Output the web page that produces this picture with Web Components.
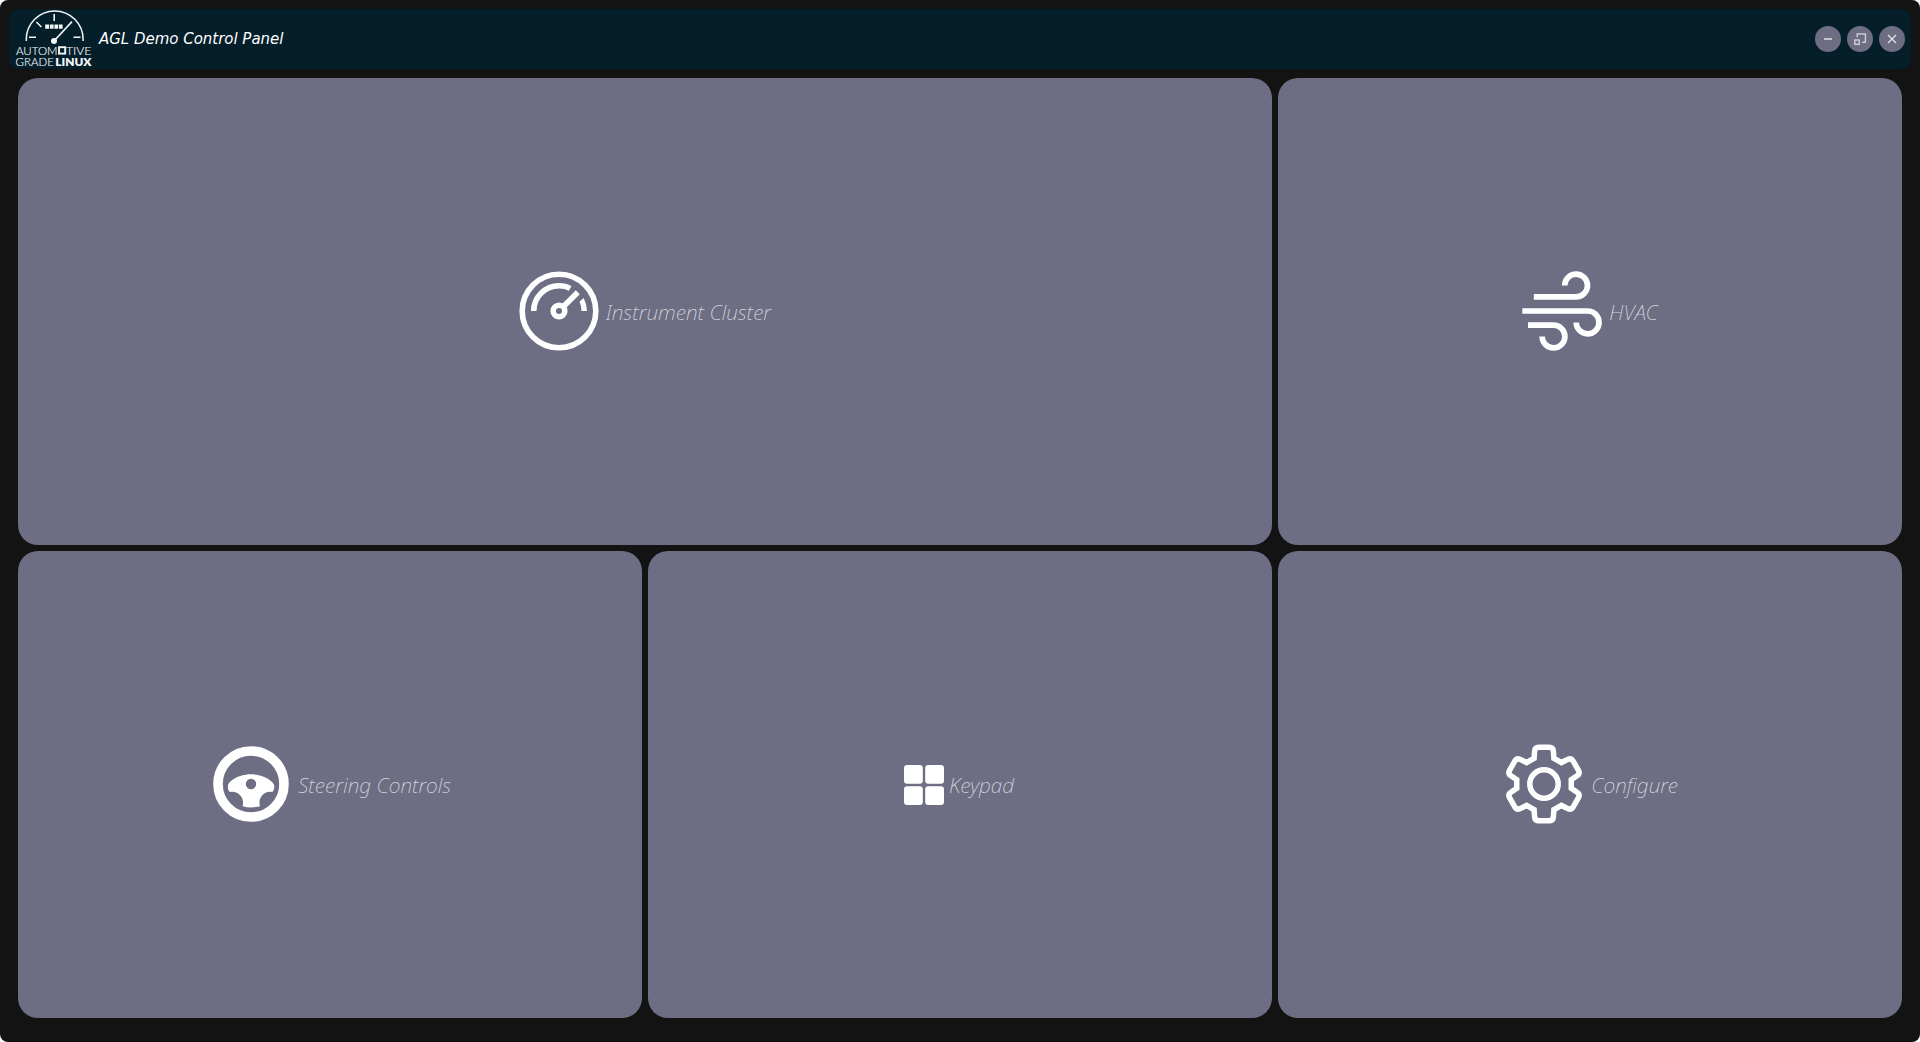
<!DOCTYPE html>
<html lang="en">
<head>
<meta charset="utf-8">
<title>AGL Demo Control Panel</title>
<style>
html, body { margin: 0; height: 100%; background: #fff; }
</style>
</head>
<body>
<agl-window></agl-window>
<script>
class Base extends HTMLElement {
  constructor() {
    super();
    this.attachShadow({ mode: 'open' }).innerHTML = this.render();
  }
}

customElements.define('agl-logo', class extends Base {
  render() {
    return `<style>
      :host { display: block; width: 78px; height: 60px; }
      svg { display: block; }
      text { font-family: Lato, "Liberation Sans", sans-serif; fill: #f4f7f8; }
      .light { font-weight: 300; stroke: #f4f7f8; stroke-width: .15px; }
    </style>
    <svg width="78" height="60" viewBox="15 9 78 60" fill="none" stroke="#f4f7f8">
      <path d="M26.3 41V39.4a28.4 28.4 0 0 1 56.8 0V41" stroke-width="1.5"/>
      <path d="M29 37.2h7M73.5 37.2h7M54.2 14v7M36.4 22l5 5" stroke-width="1.6"/>
      <path d="M54 41L72 21.6" stroke-width="1.6"/>
      <circle cx="54" cy="41" r="3" fill="#f4f7f8" stroke="none"/>
      <path d="M45.2 24.5h3.8v4.3h-3.8zM49.8 24.5h3.8v4.3h-3.8zM54.4 24.5h3.8v4.3h-3.8zM59 24.5h3.6v4.3H59z" fill="#f4f7f8" stroke="none"/>
      <text class="light" x="16" y="54.8" font-size="12" textLength="41.5" lengthAdjust="spacingAndGlyphs">AUTOM</text>
      <rect x="59" y="47.2" width="6.2" height="6.4" stroke-width="1.9"/>
      <text class="light" x="66" y="54.8" font-size="12" textLength="25.5" lengthAdjust="spacingAndGlyphs">TIVE</text>
      <text class="light" x="15.6" y="65.6" font-size="12" textLength="38.2" lengthAdjust="spacingAndGlyphs">GRADE</text>
      <text x="55.3" y="65.6" font-size="12" font-weight="800" textLength="36.2" lengthAdjust="spacingAndGlyphs" stroke="none">LINUX</text>
    </svg>`;
  }
});

customElements.define('round-button', class extends Base {
  render() {
    return `<style>
      :host { display: grid; place-items: center; width: 26px; height: 26px; border-radius: 50%; background: #6d6d84; }
      ::slotted(svg) { display: block; }
    </style><slot></slot>`;
  }
});

customElements.define('title-bar', class extends Base {
  render() {
    return `<style>
      :host { display: flex; align-items: center; height: 60px; box-sizing: border-box; padding: 0 6px; border-radius: 10px; background: #041e2a; }
      .title { flex: 1; margin-left: 6px; color: #fff; font: italic 16.65px/20px "DejaVu Sans Condensed", "DejaVu Sans", sans-serif; font-stretch: condensed; white-space: nowrap; }
      .buttons { display: flex; gap: 6px; }
    </style>
    <agl-logo></agl-logo>
    <div class="title">AGL Demo Control Panel</div>
    <div class="buttons">
      <round-button><svg width="26" height="26" fill="none" stroke="#c5c5cf" stroke-width="2"><path d="M9 13h8"/></svg></round-button>
      <round-button><svg width="26" height="26" fill="none" stroke="#c9c9d3" stroke-width="1.5"><path d="M10.2 11.2V7.9h8.2v8.3h-3.3"/><rect x="7.8" y="14" width="4.4" height="4.3"/></svg></round-button>
      <round-button><svg width="26" height="26" fill="none" stroke="#e4e4ea" stroke-width="1.2"><path d="M9 9l8 8M17 9l-8 8"/></svg></round-button>
    </div>`;
  }
});

customElements.define('panel-tile', class extends Base {
  render() {
    return `<style>
      :host { display: flex; align-items: center; justify-content: center; gap: 7px; border-radius: 20px; background: #6d6d84; box-sizing: border-box; padding-bottom: 1px; }
      :host([wide]) { grid-column: span 2; }
      .label { color: #d5d5de; font: italic 200 20.75px/30px "Noto Sans", "Open Sans", sans-serif; white-space: nowrap; padding-top: 2px; }
      ::slotted(svg) { display: block; flex: none; }
    </style><slot name="icon"></slot><span class="label"><slot></slot></span>`;
  }
});

/* Six-toothed outline: each tooth has two rounded outer corners between two valley points. */
function gearPath() {
  const pts = [];
  const at = (r, deg) => [r * Math.sin(deg * Math.PI / 180), -r * Math.cos(deg * Math.PI / 180)];
  for (let k = 0; k < 6; k++) {
    const a = k * 60;
    pts.push([at(27.6, a - 21), 0], [at(37.8, a - 14), 4], [at(37.8, a + 14), 4], [at(27.6, a + 21), 0]);
  }
  const toward = (p, q, d) => {
    const l = Math.hypot(q[0] - p[0], q[1] - p[1]);
    return [p[0] + (q[0] - p[0]) * d / l, p[1] + (q[1] - p[1]) * d / l];
  };
  const f = p => p.map(v => v.toFixed(2)).join(' ');
  return pts.map(([p, r], i) => {
    const c = i ? 'L' : 'M';
    if (!r) return c + f(p);
    return c + f(toward(p, pts[i - 1][0], r)) + 'Q' + f(p) + ' ' + f(toward(p, pts[i + 1][0], r));
  }).join('') + 'Z';
}

customElements.define('agl-window', class extends Base {
  render() {
    return `<style>
      :host { display: flex; flex-direction: column; gap: 9px; box-sizing: border-box; width: 1920px; height: 1042px; padding: 9px; background: #131313; border-radius: 8px; }
      main { display: grid; grid-template-columns: repeat(3, 624px); grid-template-rows: repeat(2, 467px); gap: 6px; padding: 0 9px; }
      .small { margin: 1px -2px 0 0; }
      .nudge { padding-left: 2px; }
      .keypad { padding-right: 2px; }
    </style>
    <title-bar></title-bar>
    <main>
      <panel-tile wide>
        <svg slot="icon" width="80" height="80" viewBox="-40 -40 80 80" fill="none" stroke="#fff" stroke-width="5.6">
          <circle r="36.8"/>
          <path d="M-25.3 0A25.3 25.3 0 0 1 0 -25.3C4 -25.3 7.8 -24.5 11.2 -22.6"/>
          <path d="M24.6 -13A28 28 0 0 1 28 0H22.4C22.4 -3.4 21.7 -6.5 20.5 -9.2Z" fill="#fff" stroke="none"/>
          <circle r="5.8"/>
          <path d="M4 -4L18.8 -18.8"/>
        </svg>Instrument Cluster</panel-tile>
      <panel-tile>
        <svg slot="icon" width="80" height="80" viewBox="1522 271 80 80" fill="none" stroke="#fff" stroke-width="5.7">
          <path d="M1533.8 296.9H1576A11.4 11.4 0 1 0 1564.7 285.5"/>
          <path d="M1522.3 311H1587.6A11.4 11.4 0 1 1 1576.2 322.5"/>
          <path d="M1528 325.1H1553.5A11.4 11.4 0 1 1 1542.1 336.6"/>
        </svg>HVAC</panel-tile>
      <panel-tile class="nudge">
        <svg slot="icon" width="80" height="80" viewBox="211 744 80 80">
          <circle cx="251" cy="784" r="33" fill="none" stroke="#fff" stroke-width="9.6"/>
          <path fill="#fff" fill-rule="evenodd" d="M228 785.6C228.5 781 239 774.3 251 774.3S273.5 781 274.3 785.6C274.5 788.5 273.6 790.5 272.3 792C264.5 790.5 257.5 797.5 260 806.2Q251 808.6 242.6 806.2C245 797.5 238 790.5 229.8 792C228.2 790.5 227.6 788.5 228 785.6ZM256.2 784a5.2 5.2 0 1 0-10.4 0a5.2 5.2 0 1 0 10.4 0Z"/>
        </svg>Steering Controls</panel-tile>
      <panel-tile class="keypad">
        <svg slot="icon" class="small" width="40" height="40" fill="#fff">
          <rect width="18.8" height="18.8" rx="3"/><rect x="21.2" width="18.8" height="18.8" rx="3"/>
          <rect y="21.2" width="18.8" height="18.8" rx="3"/><rect x="21.2" y="21.2" width="18.8" height="18.8" rx="3"/>
        </svg>Keypad</panel-tile>
      <panel-tile class="nudge">
        <svg slot="icon" width="80" height="80" viewBox="-40 -40 80 80" fill="none" stroke="#fff" stroke-width="5.5">
          <circle r="14.2"/><path d="${gearPath()}"/>
        </svg>Configure</panel-tile>
    </main>`;
  }
});
</script>
</body>
</html>
